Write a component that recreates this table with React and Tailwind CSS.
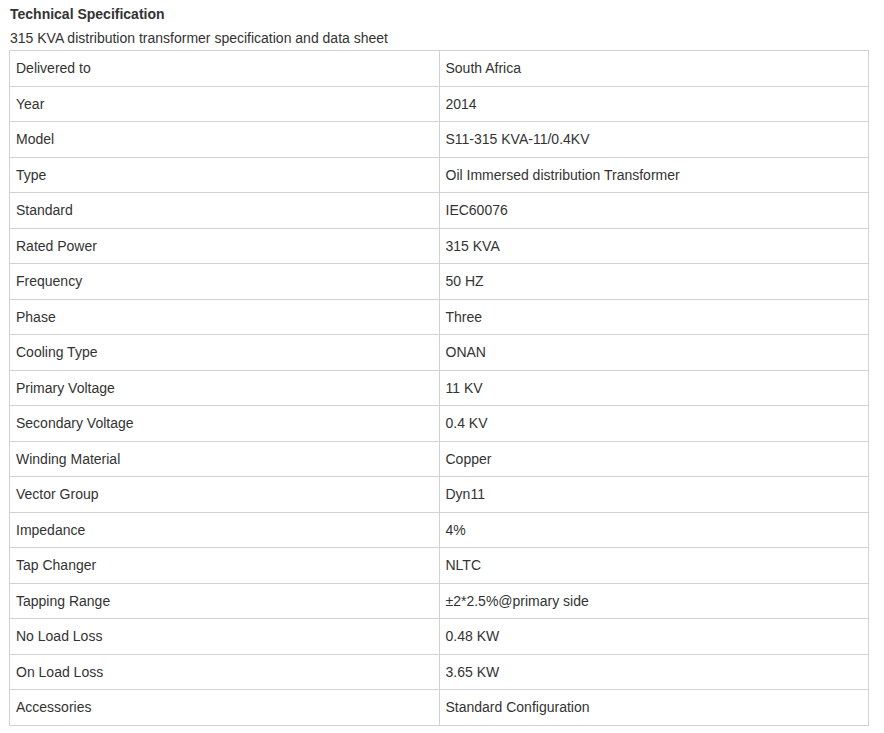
const rows = [
  ["Delivered to", "South Africa"],
  ["Year", "2014"],
  ["Model", "S11-315 KVA-11/0.4KV"],
  ["Type", "Oil Immersed distribution Transformer"],
  ["Standard", "IEC60076"],
  ["Rated Power", "315 KVA"],
  ["Frequency", "50 HZ"],
  ["Phase", "Three"],
  ["Cooling Type", "ONAN"],
  ["Primary Voltage", "11 KV"],
  ["Secondary Voltage", "0.4 KV"],
  ["Winding Material", "Copper"],
  ["Vector Group", "Dyn11"],
  ["Impedance", "4%"],
  ["Tap Changer", "NLTC"],
  ["Tapping Range", "±2*2.5%@primary side"],
  ["No Load Loss", "0.48 KW"],
  ["On Load Loss", "3.65 KW"],
  ["Accessories", "Standard Configuration"],
];

export default function App() {
  return (
    <div className="bg-white text-[#333] font-['Liberation_Sans',Arial,sans-serif] pl-[9px] pt-[4px] w-[884px] h-[733px]">
      <div className="pl-px text-[14px] font-bold leading-[20px]">Technical Specification</div>
      <div className="pl-px text-[14px] leading-[20px] mt-[4px] mb-[2px]">315 KVA distribution transformer specification and data sheet</div>
      <table className="border-collapse w-[860px] table-fixed text-[14px]">
        <tbody>
          {rows.map(([k, v]) => (
            <tr key={k}>
              <td className="border border-[#d2d2d2] pl-[6px] py-[7.25px] leading-[20px] w-1/2">{k}</td>
              <td className="border border-[#d2d2d2] pl-[6px] py-[7.25px] leading-[20px] w-1/2">{v}</td>
            </tr>
          ))}
        </tbody>
      </table>
    </div>
  );
}
